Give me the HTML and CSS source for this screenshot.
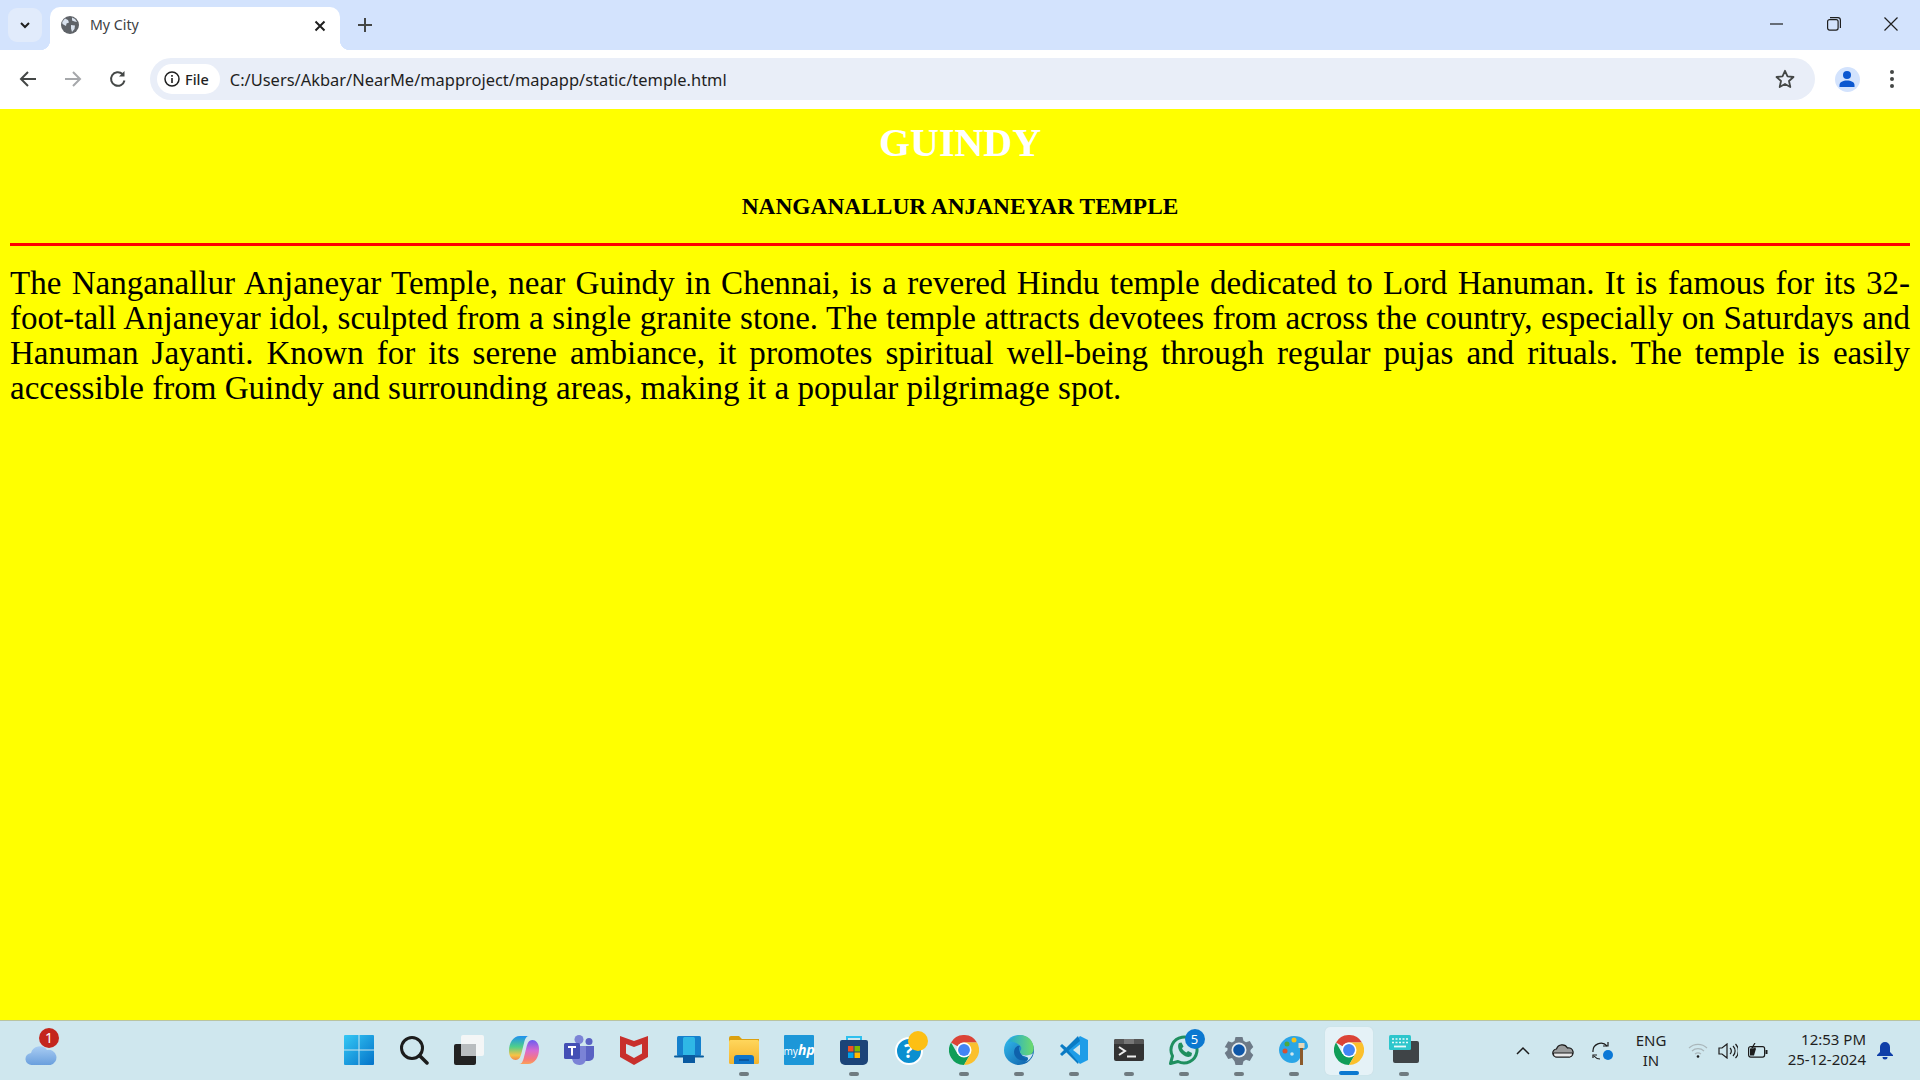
FILE: index.html
```html
<!DOCTYPE html>
<html lang="en">
<head>
  <meta charset="UTF-8">
  <title>My City</title>
  <link rel="stylesheet" href="styles.css">
</head>
<body>
<svg class="defs" aria-hidden="true">
  <defs>
    <symbol id="chrome" viewBox="0 0 48 48">
      <path fill="#db4437" d="M3.2 12A24 24 0 0 1 44.8 12H24A12 12 0 0 0 13.6 18Z"/>
      <path fill="#0f9d58" d="M3.2 12A24 24 0 0 0 24 48L34.4 30H13.6Z"/>
      <path fill="#fbc02d" d="M44.8 12A24 24 0 0 1 24 48L34.4 30 24 12Z"/>
      <circle cx="24" cy="24" r="12" fill="#fff"/>
      <circle cx="24" cy="24" r="9.5" fill="#4285f4"/>
    </symbol>
    <linearGradient id="start-blue" x1="0" y1="0" x2="1" y2="1">
      <stop offset="0" stop-color="#35c8f5"/>
      <stop offset="1" stop-color="#0473c9"/>
    </linearGradient>
    <linearGradient id="folder-yellow" x1="0" y1="0" x2="0" y2="1">
      <stop offset="0" stop-color="#ffd65c"/>
      <stop offset="1" stop-color="#f4b42c"/>
    </linearGradient>
    <linearGradient id="edge-a" x1="0" y1="0" x2="1" y2="1">
      <stop offset="0" stop-color="#35c1f1"/>
      <stop offset="1" stop-color="#0b57a4"/>
    </linearGradient>
    <linearGradient id="edge-b" x1="0" y1="0" x2="1" y2="0">
      <stop offset="0" stop-color="#1fa7d8"/>
      <stop offset="1" stop-color="#6fdc6a"/>
    </linearGradient>
    <linearGradient id="copilot-a" x1="0" y1="0" x2="0" y2="1">
      <stop offset="0" stop-color="#1e90f0"/>
      <stop offset=".45" stop-color="#4fcf8a"/>
      <stop offset=".8" stop-color="#f6c445"/>
      <stop offset="1" stop-color="#f08a4a"/>
    </linearGradient>
    <linearGradient id="copilot-b" x1="0" y1="0" x2="0" y2="1">
      <stop offset="0" stop-color="#6a5cf0"/>
      <stop offset=".45" stop-color="#d86ad0"/>
      <stop offset=".8" stop-color="#f77a7a"/>
      <stop offset="1" stop-color="#f9a25a"/>
    </linearGradient>
    <linearGradient id="cloud-blue" x1="0" y1="0" x2="0" y2="1">
      <stop offset="0" stop-color="#a9cdf3"/>
      <stop offset="1" stop-color="#6a9fdd"/>
    </linearGradient>
  </defs>
</svg>

<div class="tabstrip">
  <div class="tab-search">
    <svg width="14" height="14" viewBox="0 0 14 14"><path d="M3 5l4 4 4-4" fill="none" stroke="#1f1f1f" stroke-width="2"/></svg>
  </div>
  <div class="tab">
    <svg class="favicon" width="18" height="18" viewBox="0 0 18 18">
      <circle cx="9" cy="9" r="9" fill="#5f6368"/>
      <path fill="#d9e2ee" d="M4 2.5l3 1.500 1 2.500-2.500 1-.5 2.500L1.500 8 1.200 6zM11 1.500l3 1.500 2 3-2.500-.5L11 4.500zM10 9l4 .5-.5 3.500-2.500 3-1-3.500z"/>
    </svg>
    <span class="tab-title">My City</span>
    <svg class="tab-close" width="12" height="12" viewBox="0 0 12 12"><path d="M1.500 1.500l9 9M10.500 1.500l-9 9" stroke="#1f1f1f" stroke-width="2"/></svg>
  </div>
  <svg class="new-tab" width="14" height="14" viewBox="0 0 14 14"><path d="M7 0v14M0 7h14" stroke="#444746" stroke-width="2"/></svg>
  <div class="win-controls">
    <svg width="14" height="14" viewBox="0 0 14 14"><path d="M0 7h13" stroke="#1f1f1f" stroke-width="1.200"/></svg>
    <svg width="14" height="14" viewBox="0 0 14 14"><rect x=".6" y="2.600" width="10.500" height="10.500" rx="2" fill="none" stroke="#1f1f1f" stroke-width="1.200"/><path d="M3 .6h8a2.500 2.500 0 0 1 2.400 2.400v8" fill="none" stroke="#1f1f1f" stroke-width="1.200"/></svg>
    <svg width="14" height="14" viewBox="0 0 14 14"><path d="M.5.5l13 13M13.500.5l-13 13" stroke="#1f1f1f" stroke-width="1.200"/></svg>
  </div>
</div>

<div class="toolbar">
  <div class="nav-btn">
    <svg width="18" height="18" viewBox="0 0 18 18"><path d="M17 9H2M9 2L2 9l7 7" fill="none" stroke="#444746" stroke-width="2"/></svg>
  </div>
  <div class="nav-btn">
    <svg width="18" height="18" viewBox="0 0 18 18"><path d="M1 9h15M9 2l7 7-7 7" fill="none" stroke="#a6a8ab" stroke-width="2"/></svg>
  </div>
  <div class="nav-btn">
    <svg width="18" height="18" viewBox="0 0 18 18"><path d="M15.500 10.500A6.800 6.800 0 1 1 13.500 4" fill="none" stroke="#444746" stroke-width="2"/><path d="M15.500 1v5.500H10z" fill="#444746"/></svg>
  </div>
  <div class="omnibox">
    <div class="file-chip">
      <svg width="16" height="16" viewBox="0 0 16 16"><circle cx="8" cy="8" r="7" fill="none" stroke="#1f1f1f" stroke-width="1.500"/><path d="M8 7v5M8 4v1.800" stroke="#1f1f1f" stroke-width="1.600"/></svg>
      <span>File</span>
    </div>
    <span class="url">C:/Users/Akbar/NearMe/mapproject/mapapp/static/temple.html</span>
    <svg class="star" width="20" height="20" viewBox="0 0 20 20"><path d="M10 1.800l2.500 5.600 6 .6-4.500 4 1.300 6L10 15l-5.300 3 1.300-6-4.500-4 6-.6z" fill="none" stroke="#444746" stroke-width="1.800" stroke-linejoin="round"/></svg>
  </div>
  <div class="avatar-box">
    <div class="avatar">
      <svg width="18" height="18" viewBox="0 0 18 18"><circle cx="9" cy="5" r="4" fill="#0b57d0"/><path d="M1.500 17v-2c0-3 3.500-4.500 7.500-4.500s7.500 1.500 7.500 4.500v2z" fill="#0b57d0"/></svg>
    </div>
  </div>
  <div class="menu-box">
    <svg width="6" height="20" viewBox="0 0 6 20"><circle cx="3" cy="3" r="2" fill="#444746"/><circle cx="3" cy="10" r="2" fill="#444746"/><circle cx="3" cy="17" r="2" fill="#444746"/></svg>
  </div>
</div>

<main class="page">
  <h1 class="city">GUINDY</h1>
  <h2 class="place">NANGANALLUR ANJANEYAR TEMPLE</h2>
  <hr class="rule">
  <p class="about">The Nanganallur Anjaneyar Temple, near Guindy in Chennai, is a revered Hindu temple dedicated to Lord Hanuman. It is famous for its 32-foot-tall Anjaneyar idol, sculpted from a single granite stone. The temple attracts devotees from across the country, especially on Saturdays and Hanuman Jayanti. Known for its serene ambiance, it promotes spiritual well-being through regular pujas and rituals. The temple is easily accessible from Guindy and surrounding areas, making it a popular pilgrimage spot.</p>
</main>

<footer class="taskbar">
  <div class="weather">
    <svg width="32" height="24" viewBox="0 0 32 24"><path fill="url(#cloud-blue)" d="M7 23a6 6 0 0 1-1-12 9 9 0 0 1 16-3 7.500 7.500 0 0 1 3.500 15z"/></svg>
    <span class="weather-badge">1</span>
  </div>

  <div class="apps">
    <div class="app">
      <svg width="30" height="30" viewBox="0 0 30 30"><path fill="url(#start-blue)" d="M1 0h13.500v14.500H0V1a1 1 0 0 1 1-1zM15.500 0H29a1 1 0 0 1 1 1v13.500H15.500zM0 15.500h14.500V30H1a1 1 0 0 1-1-1zM15.500 15.500H30V29a1 1 0 0 1-1 1H15.500z"/></svg>
    </div>
    <div class="app">
      <svg width="30" height="30" viewBox="0 0 30 30"><circle cx="13" cy="13" r="10.500" fill="none" stroke="#1c1c1c" stroke-width="3"/><path d="M20.500 20.500L28 28" stroke="#1c1c1c" stroke-width="3.500" stroke-linecap="round"/></svg>
    </div>
    <div class="app">
      <svg width="30" height="30" viewBox="0 0 30 30"><rect x="0" y="9" width="22" height="21" rx="2" fill="#222"/><rect x="7" y="0" width="23" height="21" rx="2" fill="#f4f6f6"/><rect x="7" y="9" width="15" height="12" fill="#b9bdbf"/></svg>
    </div>
    <div class="app">
      <svg width="30" height="30" viewBox="0 0 30 30"><path fill="url(#copilot-a)" d="M11 1h9c-2.500 0-3.500 2-4.500 5l-3 12c-1 3-1.500 7-6 7-3 0-6.500-3-6.500-9C0 8 4 1 11 1z"/><path fill="url(#copilot-b)" d="M19 29h-9c2.500 0 3.500-2 4.500-5l3-12c1-3 1.500-7 6-7 3 0 6.500 3 6.500 9 0 8-4 15-11 15z"/></svg>
    </div>
    <div class="app">
      <svg width="30" height="30" viewBox="0 0 30 30"><circle cx="25" cy="6.500" r="3.500" fill="#5a62c3"/><circle cx="15" cy="4.500" r="4.500" fill="#7b83d6"/><path d="M20 11h10v10a5 5 0 0 1-5 5h-5z" fill="#5a62c3"/><path d="M8 11h14v13a6 6 0 0 1-6 6 8 8 0 0 1-8-6z" fill="#7b83d6"/><rect x="0" y="8" width="16" height="16" rx="1.500" fill="#4450b5"/><path d="M4 12h8M8 12v8.500" stroke="#fff" stroke-width="2"/></svg>
    </div>
    <div class="app">
      <svg width="28" height="30" viewBox="0 0 28 30"><path fill="#c8302c" fill-rule="evenodd" d="M0 1l14 5 14-5v21l-14 8-14-8zM6 9v9.500l8 4.500 8-4.500V9l-8 3z"/></svg>
    </div>
    <div class="app">
      <svg width="30" height="28" viewBox="0 0 30 28"><rect x="3" y="0" width="24" height="20" rx="1.500" fill="#1581cd"/><rect x="0" y="19.500" width="30" height="2" rx="1" fill="#0b5e9e"/><rect x="9" y="1" width="12" height="26" rx="1.500" fill="#2fb8e6"/><rect x="9" y="19" width="12" height="8" fill="#0a5aa0"/></svg>
    </div>
    <div class="app app-open">
      <svg width="30" height="28" viewBox="0 0 30 28"><path fill="#dba010" d="M0 2a2 2 0 0 1 2-2h8l3 3h17v5H0z"/><rect y="4" width="30" height="24" rx="1.500" fill="url(#folder-yellow)"/><path fill="#0f75c9" d="M5 28v-6a3 3 0 0 1 3-3h14a3 3 0 0 1 3 3v6z"/><path d="M10 24h10" stroke="#0a4e8f" stroke-width="1.500"/></svg>
    </div>
    <div class="app">
      <div class="myhp">my<i>hp</i></div>
    </div>
    <div class="app app-open">
      <svg width="30" height="30" viewBox="0 0 30 30"><path d="M8 6V2h14v4" fill="none" stroke="#2ec0ee" stroke-width="2"/><path fill="#1c4478" d="M3 5h24a2 2 0 0 1 2 2v18a5 5 0 0 1-5 5H6a5 5 0 0 1-5-5V7a2 2 0 0 1 2-2z"/><rect x="9" y="11" width="5.500" height="5.500" fill="#f25022"/><rect x="15.500" y="11" width="5.500" height="5.500" fill="#7fba00"/><rect x="9" y="17.500" width="5.500" height="5.500" fill="#00a4ef"/><rect x="15.500" y="17.500" width="5.500" height="5.500" fill="#ffb900"/></svg>
    </div>
    <div class="app">
      <div class="help-icon">?</div>
      <span class="help-dot"></span>
    </div>
    <div class="app app-open">
      <svg width="30" height="30"><use href="#chrome"/></svg>
    </div>
    <div class="app app-open">
      <svg width="30" height="30" viewBox="0 0 30 30"><circle cx="15" cy="15" r="15" fill="url(#edge-a)"/><path fill="url(#edge-b)" d="M4 7c6-9 20-9 24 0 3 6 2 12-3 13-4 1-9 0-9-3 0-2 2-2 1-5-2-4-9-6-13-5z"/><path fill="#cfe7ee" d="M16 17c0 3 5 4 9 3 2-.5 3-1 4-2-1 4-4 8-8 9 3-1 4-4 2-5-3-1-6-1-7-5z"/><path fill="#0f62ac" d="M10 17c0-4 3-7 6-6-2 2-1 5 1 8s4 5 7 5c-5 4-14 0-14-7z"/></svg>
    </div>
    <div class="app app-open">
      <svg width="30" height="30" viewBox="0 0 30 30"><path fill="#0a7bc4" d="M1 11l2-2 18 15-2 5z"/><path fill="#1e9de8" d="M21 1l8 4v20l-8 4-12-14z"/><path fill="#0a7bc4" d="M1 19l2 2 18-15-2-5z"/><path fill="#cfe7ee" d="M21 9.500L14 15l7 5.500z"/></svg>
    </div>
    <div class="app app-open">
      <svg width="30" height="22" viewBox="0 0 30 22"><rect width="30" height="22" rx="2" fill="#333"/><path d="M2 0h8v5H0V2a2 2 0 0 1 2-2z" fill="#555"/><rect x="10" width="10" height="5" fill="#777"/><path d="M20 0h8a2 2 0 0 1 2 2v3H20z" fill="#555"/><path d="M5 8l6 4-6 4" fill="none" stroke="#eee" stroke-width="2"/><path d="M13 17.500h9" stroke="#eee" stroke-width="2"/></svg>
    </div>
    <div class="app app-open">
      <svg width="30" height="30" viewBox="0 0 30 30"><path d="M1.500 28.500l2-7.500a13 13 0 1 1 5.500 5.500z" fill="none" stroke="#1f8f5f" stroke-width="3" stroke-linejoin="round"/><path fill="#1f8f5f" d="M10 8l2.500-.5 2 4-1.500 1.800c1 2 2.500 3.500 4.500 4.200l1.500-1.500 4 2-.5 2.500c-2 2.500-6 1.500-9.500-1.500S8 11 10 8z"/></svg>
      <span class="app-badge">5</span>
    </div>
    <div class="app app-open">
      <svg width="30" height="30" viewBox="0 0 30 30"><path fill="#6d7a87" d="M11.500 0h7l1 3.800 2.500 1.400 3.800-1.100 3.500 6-2.800 2.800v2.200l2.800 2.800-3.500 6-3.800-1.100-2.500 1.400-1 3.800h-7l-1-3.800L8 21l-3.800 1.100-3.500-6 2.800-2.800v-2.200L.7 10.300l3.500-6L8 5.400l2.500-1.400z" transform="translate(0 2)"/><circle cx="15" cy="15" r="7.500" fill="#e6eef2"/><circle cx="15" cy="15" r="5.800" fill="#0f57a8"/></svg>
    </div>
    <div class="app app-open">
      <svg width="30" height="30" viewBox="0 0 30 30"><path fill="#2aa5e6" d="M15 1c8 0 14 5 14 10 0 3-3 4-5 4-2 0-2 2-2 4 0 4-3 9-9 9C6 28 0 22 0 15S7 1 15 1z"/><circle cx="6" cy="16" r="2.500" fill="#d9502e"/><circle cx="8" cy="9" r="2.500" fill="#4fa83d"/><circle cx="15" cy="5" r="2.500" fill="#f2c21a"/><circle cx="13" cy="19" r="1.800" fill="#cfe7ee"/><rect x="21" y="12" width="3" height="18" fill="#8b5a2b"/><rect x="19.500" y="8" width="6" height="5" fill="#e6d7b8"/></svg>
    </div>
    <div class="app app-active">
      <svg width="30" height="30"><use href="#chrome"/></svg>
    </div>
    <div class="app app-open">
      <svg width="30" height="30" viewBox="0 0 30 30"><rect x="4" y="6" width="26" height="22" rx="2" fill="#3f4447"/><rect x="0" y="0" width="22" height="15" rx="1.500" fill="#2ec6cc"/><path d="M3 4h16M3 7.500h16" stroke="#e8fafa" stroke-width="1.500" stroke-dasharray="2 1.500"/><path d="M5 11.500h12" stroke="#e8fafa" stroke-width="1.800"/></svg>
    </div>
  </div>

  <div class="tray">
    <div class="tray-slot">
      <svg width="14" height="9" viewBox="0 0 14 9"><path d="M1 8l6-6 6 6" fill="none" stroke="#1c1c1c" stroke-width="1.500"/></svg>
    </div>
    <div class="tray-slot">
      <svg width="22" height="14" viewBox="0 0 22 14"><path d="M5 13a4 4 0 0 1-.5-8 6 6 0 0 1 11-1 4.500 4.500 0 0 1 2 9z" fill="#9a9c9c" stroke="#1c1c1c" stroke-width="1.200"/><path d="M1.500 9h19v1a3 3 0 0 1-3 3H5a3 3 0 0 1-3.500-3z" fill="#e8e8e8" stroke="#1c1c1c" stroke-width="1"/></svg>
    </div>
    <div class="tray-slot">
      <svg width="22" height="20" viewBox="0 0 22 20"><path d="M1 11a8 8 0 0 1 14-6M2 15a8 8 0 0 0 6 3" fill="none" stroke="#1c1c1c" stroke-width="1.200"/><path d="M11 5h5V1M1 17v-3h4" fill="none" stroke="#1c1c1c" stroke-width="1.200"/><circle cx="16" cy="14" r="5" fill="#0b78d6"/></svg>
    </div>
    <div class="lang"><span>ENG</span><span>IN</span></div>
    <div class="tray-icon">
      <svg width="20" height="15" viewBox="0 0 20 15"><path d="M1 5a13 13 0 0 1 18 0M4 8a9 9 0 0 1 12 0M7 11a5 5 0 0 1 6 0" fill="none" stroke="#aab7bb" stroke-width="1.200"/><circle cx="10" cy="13.500" r="1.300" fill="#1c1c1c"/></svg>
    </div>
    <div class="tray-icon">
      <svg width="20" height="16" viewBox="0 0 20 16"><path d="M1 5h3l5-4v14l-5-4H1z" fill="none" stroke="#1c1c1c" stroke-width="1.200"/><path d="M12 5a4 4 0 0 1 0 6M15 3a7 7 0 0 1 0 10M17.500 1a10 10 0 0 1 0 14" fill="none" stroke="#1c1c1c" stroke-width="1.200"/></svg>
    </div>
    <div class="tray-icon">
      <svg width="20" height="16" viewBox="0 0 20 16"><rect x=".6" y="3.600" width="16" height="10.500" rx="2" fill="none" stroke="#1c1c1c" stroke-width="1.200"/><rect x="17.500" y="7" width="2" height="4" fill="#1c1c1c"/><path d="M2 12.500V5.500h6l-2 7z" fill="#1c1c1c"/><path d="M7 0L4 5h3l-1 4" fill="none" stroke="#1c1c1c" stroke-width="1.200"/></svg>
    </div>
    <div class="clock"><span>12:53 PM</span><span>25-12-2024</span></div>
    <div class="bell">
      <svg width="16" height="18" viewBox="0 0 16 18"><path fill="#0f3fa8" d="M8 0a5 5 0 0 1 5 5v5l3 3v1H0v-1l3-3V5a5 5 0 0 1 5-5z"/><path fill="#0f3fa8" d="M5.500 15h5a2.500 2.500 0 0 1-5 0z"/></svg>
    </div>
  </div>
</footer>
</body>
</html>
```

FILE: styles.css
```css
html, body {
  margin: 0;
  height: 100%;
}

body {
  display: flex;
  flex-direction: column;
  height: 1080px;
  overflow: hidden;
  font-family: "Noto Sans", "Open Sans", sans-serif;
  color: #1f1f1f;
}

.defs {
  width: 0;
  height: 0;
  display: block;
}

/* tab strip */
.tabstrip {
  display: flex;
  align-items: flex-start;
  height: 50px;
  flex: none;
  background: #d3e3fd;
  padding-left: 8px;
  box-sizing: border-box;
}

.tab-search {
  display: flex;
  align-items: center;
  justify-content: center;
  width: 34px;
  height: 34px;
  margin-top: 8px;
  background: #e1ebfb;
  border-radius: 9px;
}

.tab {
  position: relative;
  display: flex;
  align-items: center;
  width: 290px;
  height: 43px;
  margin: 7px 0 0 8px;
  padding: 0 14px 6px 11px;
  box-sizing: border-box;
  background: #fff;
  border-radius: 10px 10px 0 0;
}

.tab::before,
.tab::after {
  content: "";
  position: absolute;
  bottom: 0;
  width: 10px;
  height: 10px;
}

.tab::before {
  left: -10px;
  background: radial-gradient(circle at 0 0, #d3e3fd 10px, #fff 10.5px);
}

.tab::after {
  right: -10px;
  background: radial-gradient(circle at 100% 0, #d3e3fd 10px, #fff 10.5px);
}

.favicon {
  margin-bottom: 2px;
}

.tab-title {
  margin: 0 0 2px 11px;
  font-size: 14.200px;
  color: #3c4043;
  flex: 1;
}

.new-tab {
  margin: 18px 0 0 18px;
}

.win-controls {
  display: flex;
  margin-left: auto;
  gap: 43px;
  padding: 17px 22px 0 0;
}

/* address bar */
.toolbar {
  display: flex;
  align-items: center;
  height: 58px;
  flex: none;
  padding: 0 8px 0 6px;
  box-sizing: border-box;
  background: #fff;
  border-radius: 10px 10px 0 0;
}

.nav-btn {
  display: flex;
  align-items: center;
  justify-content: center;
  width: 44px;
  margin-right: 1px;
}

.omnibox {
  display: flex;
  align-items: center;
  flex: 1;
  height: 42px;
  margin-left: 9px;
  padding-left: 7px;
  background: #e9eef8;
  border-radius: 21px;
}

.file-chip {
  display: flex;
  align-items: center;
  gap: 5px;
  height: 30px;
  padding: 0 11px 0 7px;
  background: #fff;
  border-radius: 15px;
  font-size: 14.500px;
  font-weight: 500;
}

.url {
  margin-left: 10px;
  font-size: 16.450px;
  color: #1f1f1f;
  flex: 1;
}

.star {
  margin-right: 20px;
}

.avatar-box {
  display: flex;
  justify-content: center;
  width: 40px;
  margin-left: 12px;
}

.avatar {
  display: flex;
  align-items: center;
  justify-content: center;
  width: 25px;
  height: 25px;
  border-radius: 50%;
  background: #d3e3fd;
}

.menu-box {
  display: flex;
  justify-content: center;
  width: 40px;
  margin-left: 5px;
}

/* the page itself */
.page {
  flex: 1;
  padding: 0 10px;
  margin-top: 1px;
  background: #ff0;
  font-family: "Liberation Serif", serif;
  color: #000;
  overflow: hidden;
}

.city {
  margin: 10px 0 0;
  font-size: 40px;
  line-height: 47px;
  text-align: center;
  color: #fff;
}

.place {
  margin: 26px 0 0;
  font-size: 23.400px;
  line-height: 28px;
  text-align: center;
}

.rule {
  margin: 23px 0 0;
  height: 3px;
  border: none;
  background: #f00;
}

.about {
  margin: 20px 0 0;
  font-size: 33.050px;
  line-height: 35px;
  text-align: justify;
}

/* taskbar */
.taskbar {
  display: flex;
  align-items: center;
  height: 60px;
  flex: none;
  box-sizing: border-box;
  background: #cfe7ee;
  border-top: 1px solid #b9c4a0;
}

.weather {
  position: relative;
  width: 331px;
  flex: none;
  padding: 12px 0 0 25px;
  box-sizing: border-box;
}

.weather-badge {
  position: absolute;
  left: 39px;
  top: -2px;
  width: 20px;
  height: 20px;
  border-radius: 50%;
  background: #c4261d;
  color: #fff;
  font-size: 14px;
  line-height: 20px;
  text-align: center;
}

.apps {
  display: flex;
}

.app {
  position: relative;
  display: flex;
  align-items: center;
  justify-content: center;
  width: 48px;
  height: 48px;
  margin: 0 3.500px;
  padding-bottom: 2px;
  box-sizing: border-box;
  border-radius: 5px;
}

.app-open::after,
.app-active::after {
  content: "";
  position: absolute;
  bottom: -1px;
  left: 19px;
  width: 10px;
  height: 4px;
  border-radius: 2px;
  background: #6f7b80;
}

.app-active {
  background: #e5f2f7;
  box-shadow: 0 0 1px #bcd0d6;
}

.app-active::after {
  bottom: 0;
  left: 14px;
  width: 20px;
  background: #0b78d0;
}

.app-badge {
  position: absolute;
  top: 2px;
  right: 3px;
  width: 20px;
  height: 20px;
  border-radius: 50%;
  background: #0b78d0;
  color: #fff;
  font-size: 13px;
  line-height: 20px;
  text-align: center;
}

.myhp {
  width: 30px;
  height: 30px;
  background: #1c97d8;
  border-radius: 1px;
  color: #fff;
  font-size: 10px;
  line-height: 30px;
  text-align: center;
}

.myhp i {
  font-size: 14px;
  font-weight: 700;
}

.help-icon {
  width: 24px;
  height: 24px;
  margin-top: 3px;
  border-radius: 50%;
  border: 2px solid #fff;
  background: #0b8fd0;
  color: #fff;
  font-size: 19px;
  font-weight: 700;
  line-height: 24px;
  text-align: center;
}

.help-dot {
  position: absolute;
  top: 4px;
  right: 5px;
  width: 20px;
  height: 20px;
  border-radius: 50%;
  background: #fdbf13;
}

.tray {
  display: flex;
  align-items: center;
  margin-left: auto;
  padding-right: 16px;
}

.tray-slot {
  display: flex;
  justify-content: center;
  width: 40px;
}

.tray-icon {
  display: flex;
  justify-content: center;
  width: 30px;
}

.lang {
  display: flex;
  flex-direction: column;
  align-items: center;
  width: 56px;
  margin-right: 4px;
  padding-bottom: 2px;
  font-size: 15px;
  line-height: 20px;
}

.clock {
  display: flex;
  flex-direction: column;
  align-items: flex-end;
  width: 93px;
  padding-bottom: 4px;
  font-size: 15px;
  line-height: 20px;
  white-space: nowrap;
}

.bell {
  display: flex;
  justify-content: center;
  width: 38px;
}
```
